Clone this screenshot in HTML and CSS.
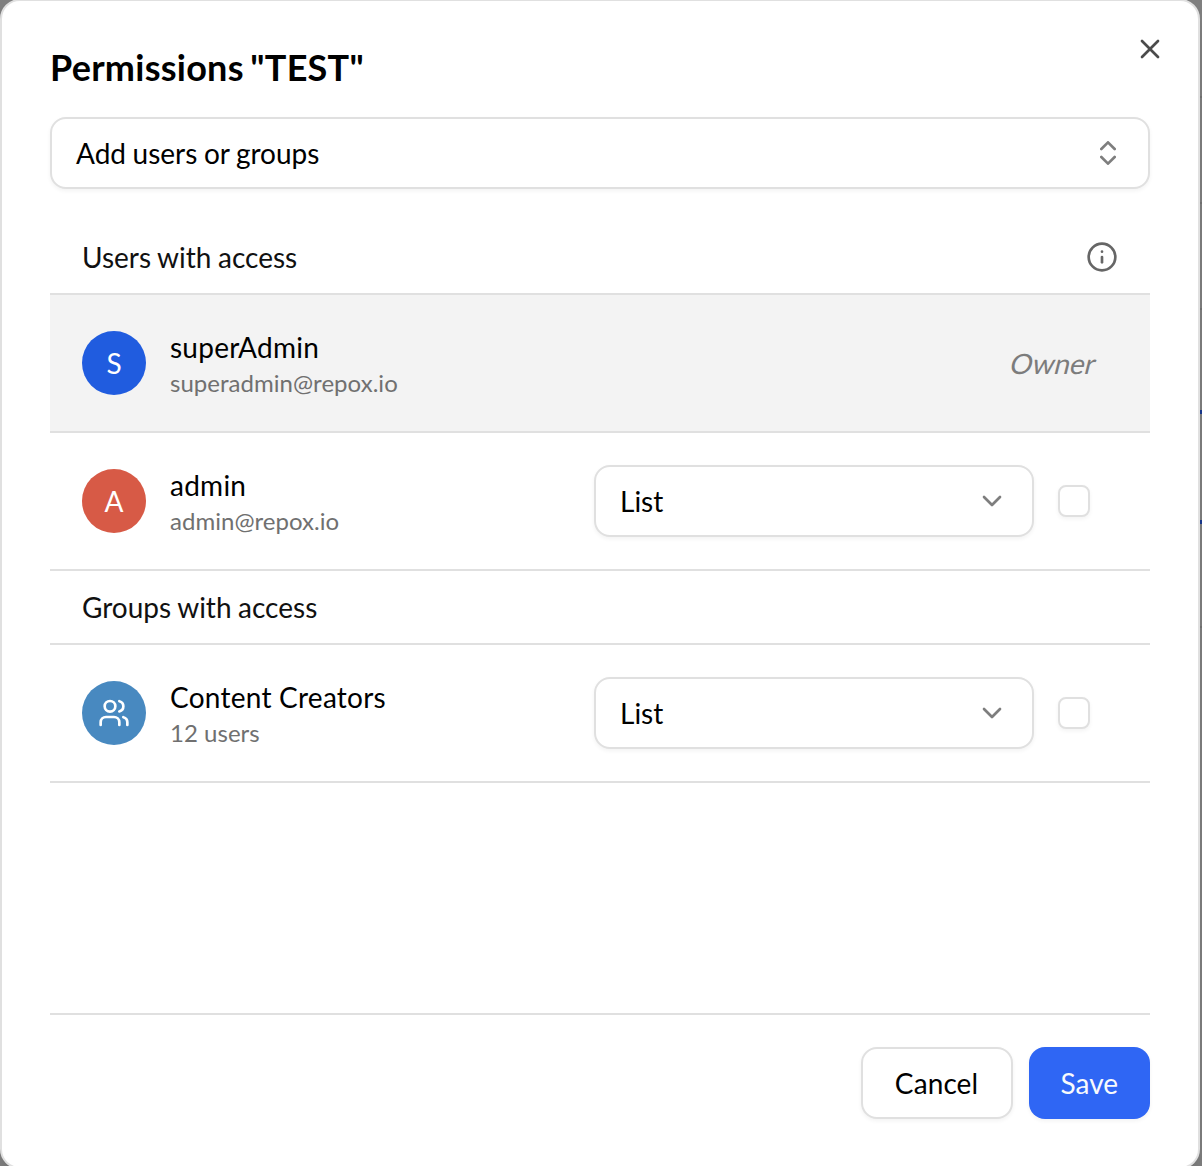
FILE: index.html
```html
<!DOCTYPE html>
<html lang="en">
    <head>
        <meta charset="UTF-8">
        <meta name="viewport" content="width=device-width, initial-scale=1.0">
        <title>Permissions</title>
        <link rel="stylesheet" href="styles.css">
    </head>
    <body>

        <!-- Page strip behind the dialog -->
        <div class="backdrop">
            <span class="rule rule-1"></span>
            <span class="rule rule-2"></span>
            <span class="rule rule-3"></span>
            <span class="rule rule-4"></span>
            <span class="rule rule-5"></span>
            <span class="rule rule-6"></span>
        </div>

        <div class="dialog">
            <button class="close" aria-label="Close">
                <svg class="icon" viewBox="0 0 24 24"><path d="M18 6 6 18"/><path d="m6 6 12 12"/></svg>
            </button>

            <h1>Permissions "TEST"</h1>

            <button class="field">
                <span>Add users or groups</span>
                <svg class="icon muted" viewBox="0 0 24 24"><path d="m7 15 5 5 5-5"/><path d="m7 9 5-5 5 5"/></svg>
            </button>

            <!-- Access list -->
            <div class="access-list">
                <div class="section-title">
                    <span>Users with access</span>
                    <svg class="icon info" viewBox="0 0 24 24"><circle cx="12" cy="12" r="10"/><path d="M12 16v-4"/><path d="M12 8h.01"/></svg>
                </div>
                <div class="row owner-row">
                    <div class="avatar blue">S</div>
                    <div class="person">
                        <p class="name">superAdmin</p>
                        <p class="detail">superadmin@repox.io</p>
                    </div>
                    <span class="owner">Owner</span>
                </div>
                <div class="row">
                    <div class="avatar red">A</div>
                    <div class="person">
                        <p class="name">admin</p>
                        <p class="detail">admin@repox.io</p>
                    </div>
                    <button class="field select">
                        <span>List</span>
                        <svg class="icon muted" viewBox="0 0 24 24"><path d="m6 9 6 6 6-6"/></svg>
                    </button>
                    <input type="checkbox" class="check">
                </div>

                <div class="section-title">
                    <span>Groups with access</span>
                </div>
                <div class="row">
                    <div class="avatar sky">
                        <svg class="icon" viewBox="0 0 24 24"><path d="M16 21v-2a4 4 0 0 0-4-4H6a4 4 0 0 0-4 4v2"/><circle cx="9" cy="7" r="4"/><path d="M22 21v-2a4 4 0 0 0-3-3.87"/><path d="M16 3.13a4 4 0 0 1 0 7.75"/></svg>
                    </div>
                    <div class="person">
                        <p class="name">Content Creators</p>
                        <p class="detail">12 users</p>
                    </div>
                    <button class="field select">
                        <span>List</span>
                        <svg class="icon muted" viewBox="0 0 24 24"><path d="m6 9 6 6 6-6"/></svg>
                    </button>
                    <input type="checkbox" class="check">
                </div>
            </div>

            <!-- Dialog buttons -->
            <div class="actions">
                <button class="btn cancel">Cancel</button>
                <button class="btn primary">Save</button>
            </div>
        </div>

    </body>
</html>
```

FILE: styles.css
```css
* {
    box-sizing: border-box;
}
body {
    margin: 0;
    height: 1166px;
    overflow: hidden;
    background-color: #7f7f7f;
    font-family: Lato, "Liberation Sans", sans-serif;
    font-size: 28px;
    line-height: 40px;
    color: #000;
}
h1, p {
    margin: 0;
}
button {
    font: inherit;
    color: inherit;
    cursor: pointer;
}
.icon {
    display: block;
    flex-shrink: 0;
    width: 32px;
    height: 32px;
    fill: none;
    stroke: currentColor;
    stroke-width: 2;
    stroke-linecap: round;
    stroke-linejoin: round;
}
.muted {
    opacity: 0.5;
}
.backdrop {
    position: absolute;
    top: 0;
    right: 0;
    width: 20px;
    height: 1166px;
}
.rule {
    position: absolute;
    left: 0;
    right: 0;
    height: 2px;
    background-color: #737373;
}
.rule-1 { top: 96px; }
.rule-2 { top: 202px; }
.rule-3 { top: 308px; }
.rule-4 { top: 410px; height: 4px; background-color: #1a3a8f; }
.rule-5 { top: 520px; height: 4px; background-color: #1a3a8f; }
.rule-6 { top: 626px; }

.dialog {
    position: relative;
    display: flex;
    flex-direction: column;
    width: 1200px;
    height: 1170px;
    margin-top: -1px;
    padding: 48px;
    background-color: #fff;
    border: 2px solid #e0e0e0;
    border-radius: 20px;
    box-shadow: 0 20px 30px -6px rgba(0, 0, 0, 0.1), 0 8px 12px -8px rgba(0, 0, 0, 0.1);
}
.close {
    position: absolute;
    top: 32px;
    right: 32px;
    padding: 0;
    background: none;
    border: none;
    opacity: 0.7;
}
h1 {
    margin-bottom: 32px;
    font-size: 36px;
    font-weight: bold;
    line-height: 36px;
    letter-spacing: 0.25px;
    word-spacing: -2.4px;
}
.field {
    display: flex;
    flex-shrink: 0;
    justify-content: space-between;
    align-items: center;
    height: 72px;
    padding: 0 24px;
    background-color: #fff;
    border: 2px solid #e0e0e0;
    border-radius: 16px;
    box-shadow: 0 2px 4px rgba(0, 0, 0, 0.05);
    word-spacing: -0.6px;
}
.access-list {
    flex: 1;
    margin-top: 32px;
    border-bottom: 2px solid #e0e0e0;
}
.section-title {
    display: flex;
    justify-content: space-between;
    align-items: center;
    height: 74px;
    padding: 0 32px;
    border-bottom: 2px solid #e0e0e0;
    color: #111;
    word-spacing: -0.6px;
}
.info {
    color: #666;
}
.row {
    display: flex;
    align-items: center;
    height: 138px;
    padding: 0 60px 0 32px;
    border-bottom: 2px solid #e0e0e0;
}
.owner-row {
    padding-right: 54px;
    background-color: #f3f3f3;
}
.avatar {
    display: flex;
    justify-content: center;
    align-items: center;
    width: 64px;
    height: 64px;
    margin-right: 24px;
    border-radius: 50%;
    color: #fff;
}
.blue { background-color: #205cdf; }
.red { background-color: #d75a46; }
.sky { background-color: #4889c0; }
.person {
    flex: 1;
}
.name {
    line-height: 40px;
    letter-spacing: 0.25px;
}
.detail {
    font-size: 24px;
    line-height: 32px;
    letter-spacing: 0.03px;
    color: #707070;
}
/* slanted upright face, wider than the real italic */
.owner {
    color: #7c7c7c;
    transform: skewX(-14deg);
}
.select {
    width: 440px;
    margin-right: 24px;
}
.check {
    appearance: none;
    width: 32px;
    height: 32px;
    margin: 0;
    background-color: #fff;
    border: 2px solid #e0e0e0;
    border-radius: 8px;
    box-shadow: 0 2px 4px rgba(0, 0, 0, 0.05);
}
.actions {
    display: flex;
    justify-content: flex-end;
    gap: 16px;
    margin-top: 32px;
}
.btn {
    height: 72px;
    padding: 0 32px;
    background-color: #fff;
    border: 2px solid #e0e0e0;
    border-radius: 16px;
    box-shadow: 0 2px 4px rgba(0, 0, 0, 0.05);
}
.cancel {
    width: 152px;
    letter-spacing: 0.1px;
}
.primary {
    background-color: #2f66f4;
    border: none;
    color: #f8fafc;
}
```
